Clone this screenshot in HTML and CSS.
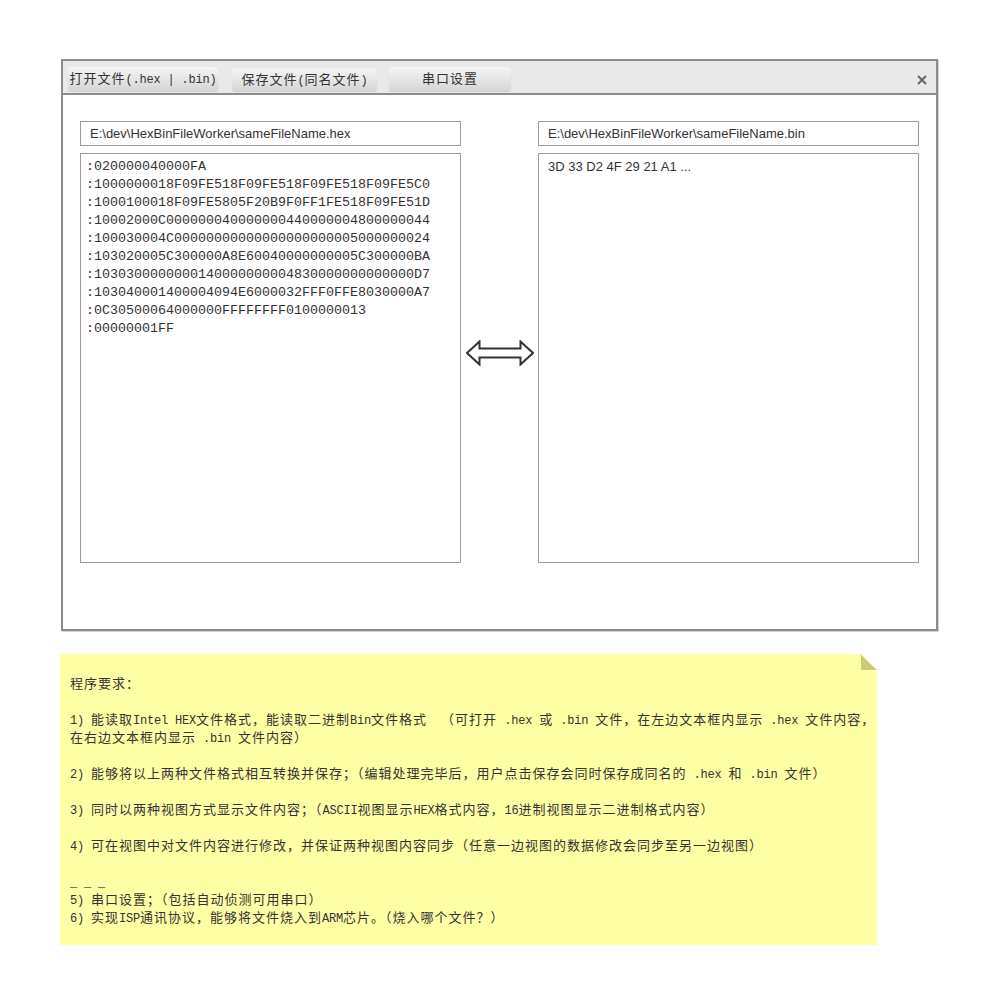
FILE: index.html
```html
<!DOCTYPE html>
<html lang="zh-CN">
<head>
<meta charset="utf-8">
<title>HexBinFileWorker</title>
<link rel="stylesheet" href="styles.css">
</head>
<body>
<div class="page">
  <div class="window">
    <div class="toolbar">
      <button class="btn btn-open">打开文件<span class="l">(.hex | .bin)</span></button>
      <button class="btn btn-save">保存文件<span class="l">(</span>同名文件<span class="l">)</span></button>
      <button class="btn btn-port">串口设置</button>
      <span class="close">
        <svg width="10" height="10" viewBox="0 0 10 10"><path d="M1 1 L9 9 M9 1 L1 9" stroke="#666" stroke-width="2" fill="none"/></svg>
      </span>
    </div>
    <div class="body">
      <div class="pane">
        <div class="path">E:\dev\HexBinFileWorker\sameFileName.hex</div>
        <div class="editor hex">:020000040000FA
:1000000018F09FE518F09FE518F09FE518F09FE5C0
:1000100018F09FE5805F20B9F0FF1FE518F09FE51D
:10002000C000000040000000440000004800000044
:100030004C00000000000000000000005000000024
:103020005C300000A8E60040000000005C300000BA
:1030300000000140000000004830000000000000D7
:103040001400004094E6000032FFF0FFE8030000A7
:0C30500064000000FFFFFFFF0100000013
:00000001FF</div>
      </div>
      <div class="arrow">
        <svg width="68" height="26" viewBox="0 0 68 26"><path d="M1 13 L13.5 1.5 V8.5 H54.5 V1.5 L67 13 L54.5 24.5 V17.5 H13.5 V24.5 Z" fill="#fff" stroke="#333" stroke-width="2" stroke-linejoin="miter"/></svg>
      </div>
      <div class="pane">
        <div class="path">E:\dev\HexBinFileWorker\sameFileName.bin</div>
        <div class="editor bin">3D 33 D2 4F 29 21 A1 ...</div>
      </div>
    </div>
  </div>

  <div class="note">
    <p>程序要求：</p>
    <p><span class="l">1) </span>能读取<span class="l">Intel HEX</span>文件格式，能读取二进制<span class="l">Bin</span>文件格式<span class="l">  </span>（可打开<span class="l"> .hex </span>或<span class="l"> .bin </span>文件，在左边文本框内显示<span class="l"> .hex </span>文件内容，<br>在右边文本框内显示<span class="l"> .bin </span>文件内容）</p>
    <p><span class="l">2) </span>能够将以上两种文件格式相互转换并保存；（编辑处理完毕后，用户点击保存会同时保存成同名的<span class="l"> .hex </span>和<span class="l"> .bin </span>文件）</p>
    <p><span class="l">3) </span>同时以两种视图方式显示文件内容；（<span class="l">ASCII</span>视图显示<span class="l">HEX</span>格式内容，<span class="l">16</span>进制视图显示二进制格式内容）</p>
    <p><span class="l">4) </span>可在视图中对文件内容进行修改，并保证两种视图内容同步（任意一边视图的数据修改会同步至另一边视图）</p>
    <p><span class="l">_ _ _</span><br><span class="l">5) </span>串口设置；（包括自动侦测可用串口）<br><span class="l">6) </span>实现<span class="l">ISP</span>通讯协议，能够将文件烧入到<span class="l">ARM</span>芯片。（烧入哪个文件？）</p>
  </div>
</div>
</body>
</html>
```

FILE: styles.css
```css
html, body {
  margin: 0;
  padding: 0;
  background: #fff;
}

body {
  font-family: "Noto Sans CJK SC", "Liberation Sans", sans-serif;
  color: #333;
}

.page {
  padding: 59px 0 40px 60px;
}

.l {
  font-family: "Liberation Mono", "Noto Sans CJK SC", monospace;
  font-size: 12px;
  letter-spacing: -0.2px;
  line-height: 10px;
  white-space: pre;
}

/* ---------- window ---------- */
.window {
  margin-left: 1px;
  width: 877px;
  height: 572px;
  box-sizing: border-box;
  border: 2px solid #8c8c8c;
  display: flex;
  flex-direction: column;
  background: #fff;
  box-shadow: 1px 1px 0 #d4d4d4;
}

.toolbar {
  height: 34px;
  box-sizing: border-box;
  background: #e9e9e9;
  border-bottom: 2px solid #8c8c8c;
  display: flex;
  align-items: flex-start;
  padding: 6px 9px 0 5px;
}

.btn {
  height: 24px;
  border: none;
  border-radius: 3px;
  padding: 0 0 3px;
  margin: 0;
  background: linear-gradient(to bottom, #f5f5f5 0%, #e6e6e6 50%, #d5d5d5 100%);
  box-shadow: 0 1px 1px rgba(0, 0, 0, 0.12);
  font-family: "Noto Sans CJK SC", sans-serif;
  font-size: 13px;
  letter-spacing: 1px;
  line-height: 18px;
  color: #333;
  white-space: nowrap;
  text-align: center;
}

.btn-open {
  width: 150px;
}

.btn-save {
  width: 145px;
  margin-left: 14px;
  margin-top: 1px;
  height: 23px;
  padding-bottom: 1px;
}

.btn-port {
  width: 122px;
  margin-left: 12px;
}

.close {
  margin-left: auto;
  align-self: center;
  margin-top: 0;
  width: 10px;
  height: 10px;
  display: flex;
}

/* ---------- body ---------- */
.body {
  flex: 1;
  display: flex;
  padding: 26px 17px 0;
}

.pane {
  width: 381px;
  display: flex;
  flex-direction: column;
  gap: 7px;
}

.path {
  height: 25px;
  box-sizing: border-box;
  border: 1px solid #9c9c9c;
  padding: 0 9px;
  font-family: "Liberation Sans", Arial, sans-serif;
  font-size: 13px;
  line-height: 23px;
  color: #333;
  white-space: nowrap;
}

.editor {
  height: 410px;
  box-sizing: border-box;
  border: 1px solid #9c9c9c;
  white-space: pre;
  color: #333;
  overflow: hidden;
}

.editor.hex {
  font-family: "Liberation Mono", monospace;
  font-size: 13.333px;
  line-height: 18px;
  padding: 4px 5px;
}

.editor.bin {
  font-family: "Liberation Sans", Arial, sans-serif;
  font-size: 13px;
  line-height: 18px;
  padding: 4px 9px;
}

.arrow {
  width: 77px;
  display: flex;
  justify-content: center;
  align-items: flex-start;
  padding-top: 219px;
}

/* ---------- note ---------- */
.note {
  position: relative;
  margin-top: 23px;
  width: 817px;
  height: 291px;
  box-sizing: border-box;
  padding: 20px 10px;
  background: #ffffa5;
  clip-path: polygon(0 0, calc(100% - 16px) 0, 100% 16px, 100% 100%, 0 100%);
  font-family: "Noto Sans CJK SC", sans-serif;
  font-size: 13px;
  letter-spacing: 1px;
  line-height: 18px;
  color: #333;
  white-space: nowrap;
}

.note::after {
  content: "";
  position: absolute;
  top: 0;
  right: 0;
  width: 16px;
  height: 16px;
  background: linear-gradient(to bottom left, transparent 50%, #cccc77 50%);
}

.note p {
  margin: 0 0 18px;
}

.note p:last-child {
  margin-bottom: 0;
}
```
